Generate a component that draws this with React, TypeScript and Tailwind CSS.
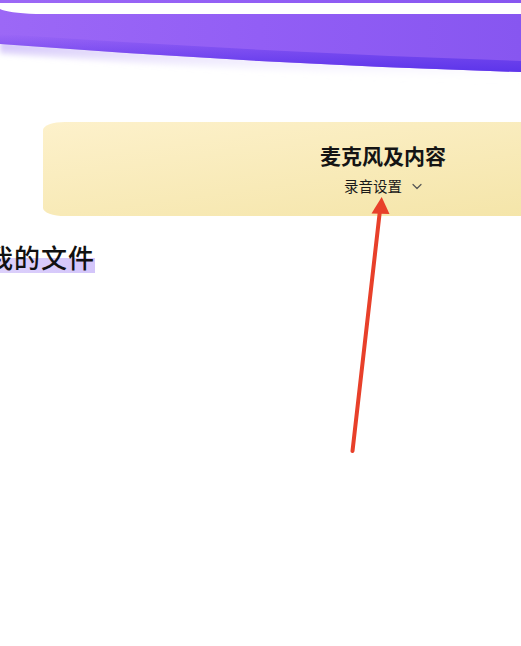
import React from "react";

export default function App() {
  return (
    <div
      className="relative w-[521px] h-[646px] overflow-hidden bg-white"
      style={{ fontFamily: '"Noto Sans CJK SC", "Noto Sans", sans-serif' }}
    >
      {/* purple header decoration */}
      <svg width="521" height="90" viewBox="0 0 521 90" className="block">
        <defs>
          <linearGradient id="pg" x1="0" y1="0" x2="1" y2="0">
            <stop offset="0" stopColor="#9c68f6" />
            <stop offset="0.5" stopColor="#925ef5" />
            <stop offset="1" stopColor="#8756f0" />
          </linearGradient>
          <linearGradient id="dk" x1="0" y1="0" x2="0" y2="1">
            <stop offset="0" stopColor="#5a33ea" stopOpacity="0" />
            <stop offset="1" stopColor="#5a33ea" stopOpacity="0.95" />
          </linearGradient>
          <linearGradient id="sh" x1="0" y1="0" x2="0" y2="1">
            <stop offset="0" stopColor="#b39bf5" stopOpacity="0.7" />
            <stop offset="1" stopColor="#ffffff" stopOpacity="0" />
          </linearGradient>
          <filter id="bl" x="-10%" y="-50%" width="120%" height="200%">
            <feGaussianBlur stdDeviation="2.5" />
          </filter>
        </defs>
        <path
          d="M0 42 Q 260 62 521 70 L 521 82 Q 260 74 0 54 Z"
          fill="url(#sh)"
          filter="url(#bl)"
        />
        <path d="M0 0 L521 0 L521 72 Q 260 64 0 44 Z" fill="url(#pg)" />
        <path d="M0 34 Q 260 52 521 61 L521 72 Q 260 64 0 44 Z" fill="url(#dk)" />
        <path d="M0 3 L521 3 L521 14 L36 14 Q 8 13 0 9 Z" fill="#ffffff" />
      </svg>

      {/* yellow card */}
      <div className="mt-[32px] ml-[43px] w-[700px] h-[94px] rounded-tl-[22px_8px] rounded-bl-[22px_8px] bg-gradient-to-br from-[#fdf1cb] to-[#f3e3a3] flex">
        <div className="w-[680px] flex flex-col items-center pt-[19px]">
          <div className="text-[21px] leading-[28px] font-bold text-[#141414]">
            麦克风及内容
          </div>
          <div className="mt-[7px] flex items-center gap-[10px] text-[14.5px] leading-[20px] text-[#1a1a1a]">
            <span>录音设置</span>
            <svg width="10" height="7" viewBox="0 0 10 7">
              <path
                d="M1 1.5 L5 5.5 L9 1.5"
                fill="none"
                stroke="#555"
                strokeWidth="1.2"
                strokeLinecap="round"
                strokeLinejoin="round"
              />
            </svg>
          </div>
        </div>
      </div>

      {/* 我的文件 */}
      <div className="mt-[25px] relative w-fit -ml-[13px]">
        <div className="absolute left-[13px] right-0 top-[17px] h-[15px] bg-gradient-to-r from-[#dcd0fb] to-[#d3c5fa]" />
        <div className="relative text-[26px] leading-[31px] text-[#111] font-medium tracking-[1px]">
          我的文件
        </div>
      </div>

      {/* red arrow annotation */}
      <svg
        className="absolute left-0 top-0 pointer-events-none"
        width="521"
        height="646"
        viewBox="0 0 521 646"
      >
        <line
          x1="352.5"
          y1="451"
          x2="380"
          y2="210"
          stroke="#e8402a"
          strokeWidth="4"
          strokeLinecap="round"
        />
        <path d="M381.7 197 L371.5 213.5 L389.5 214 Z" fill="#e8402a" />
      </svg>
    </div>
  );
}
